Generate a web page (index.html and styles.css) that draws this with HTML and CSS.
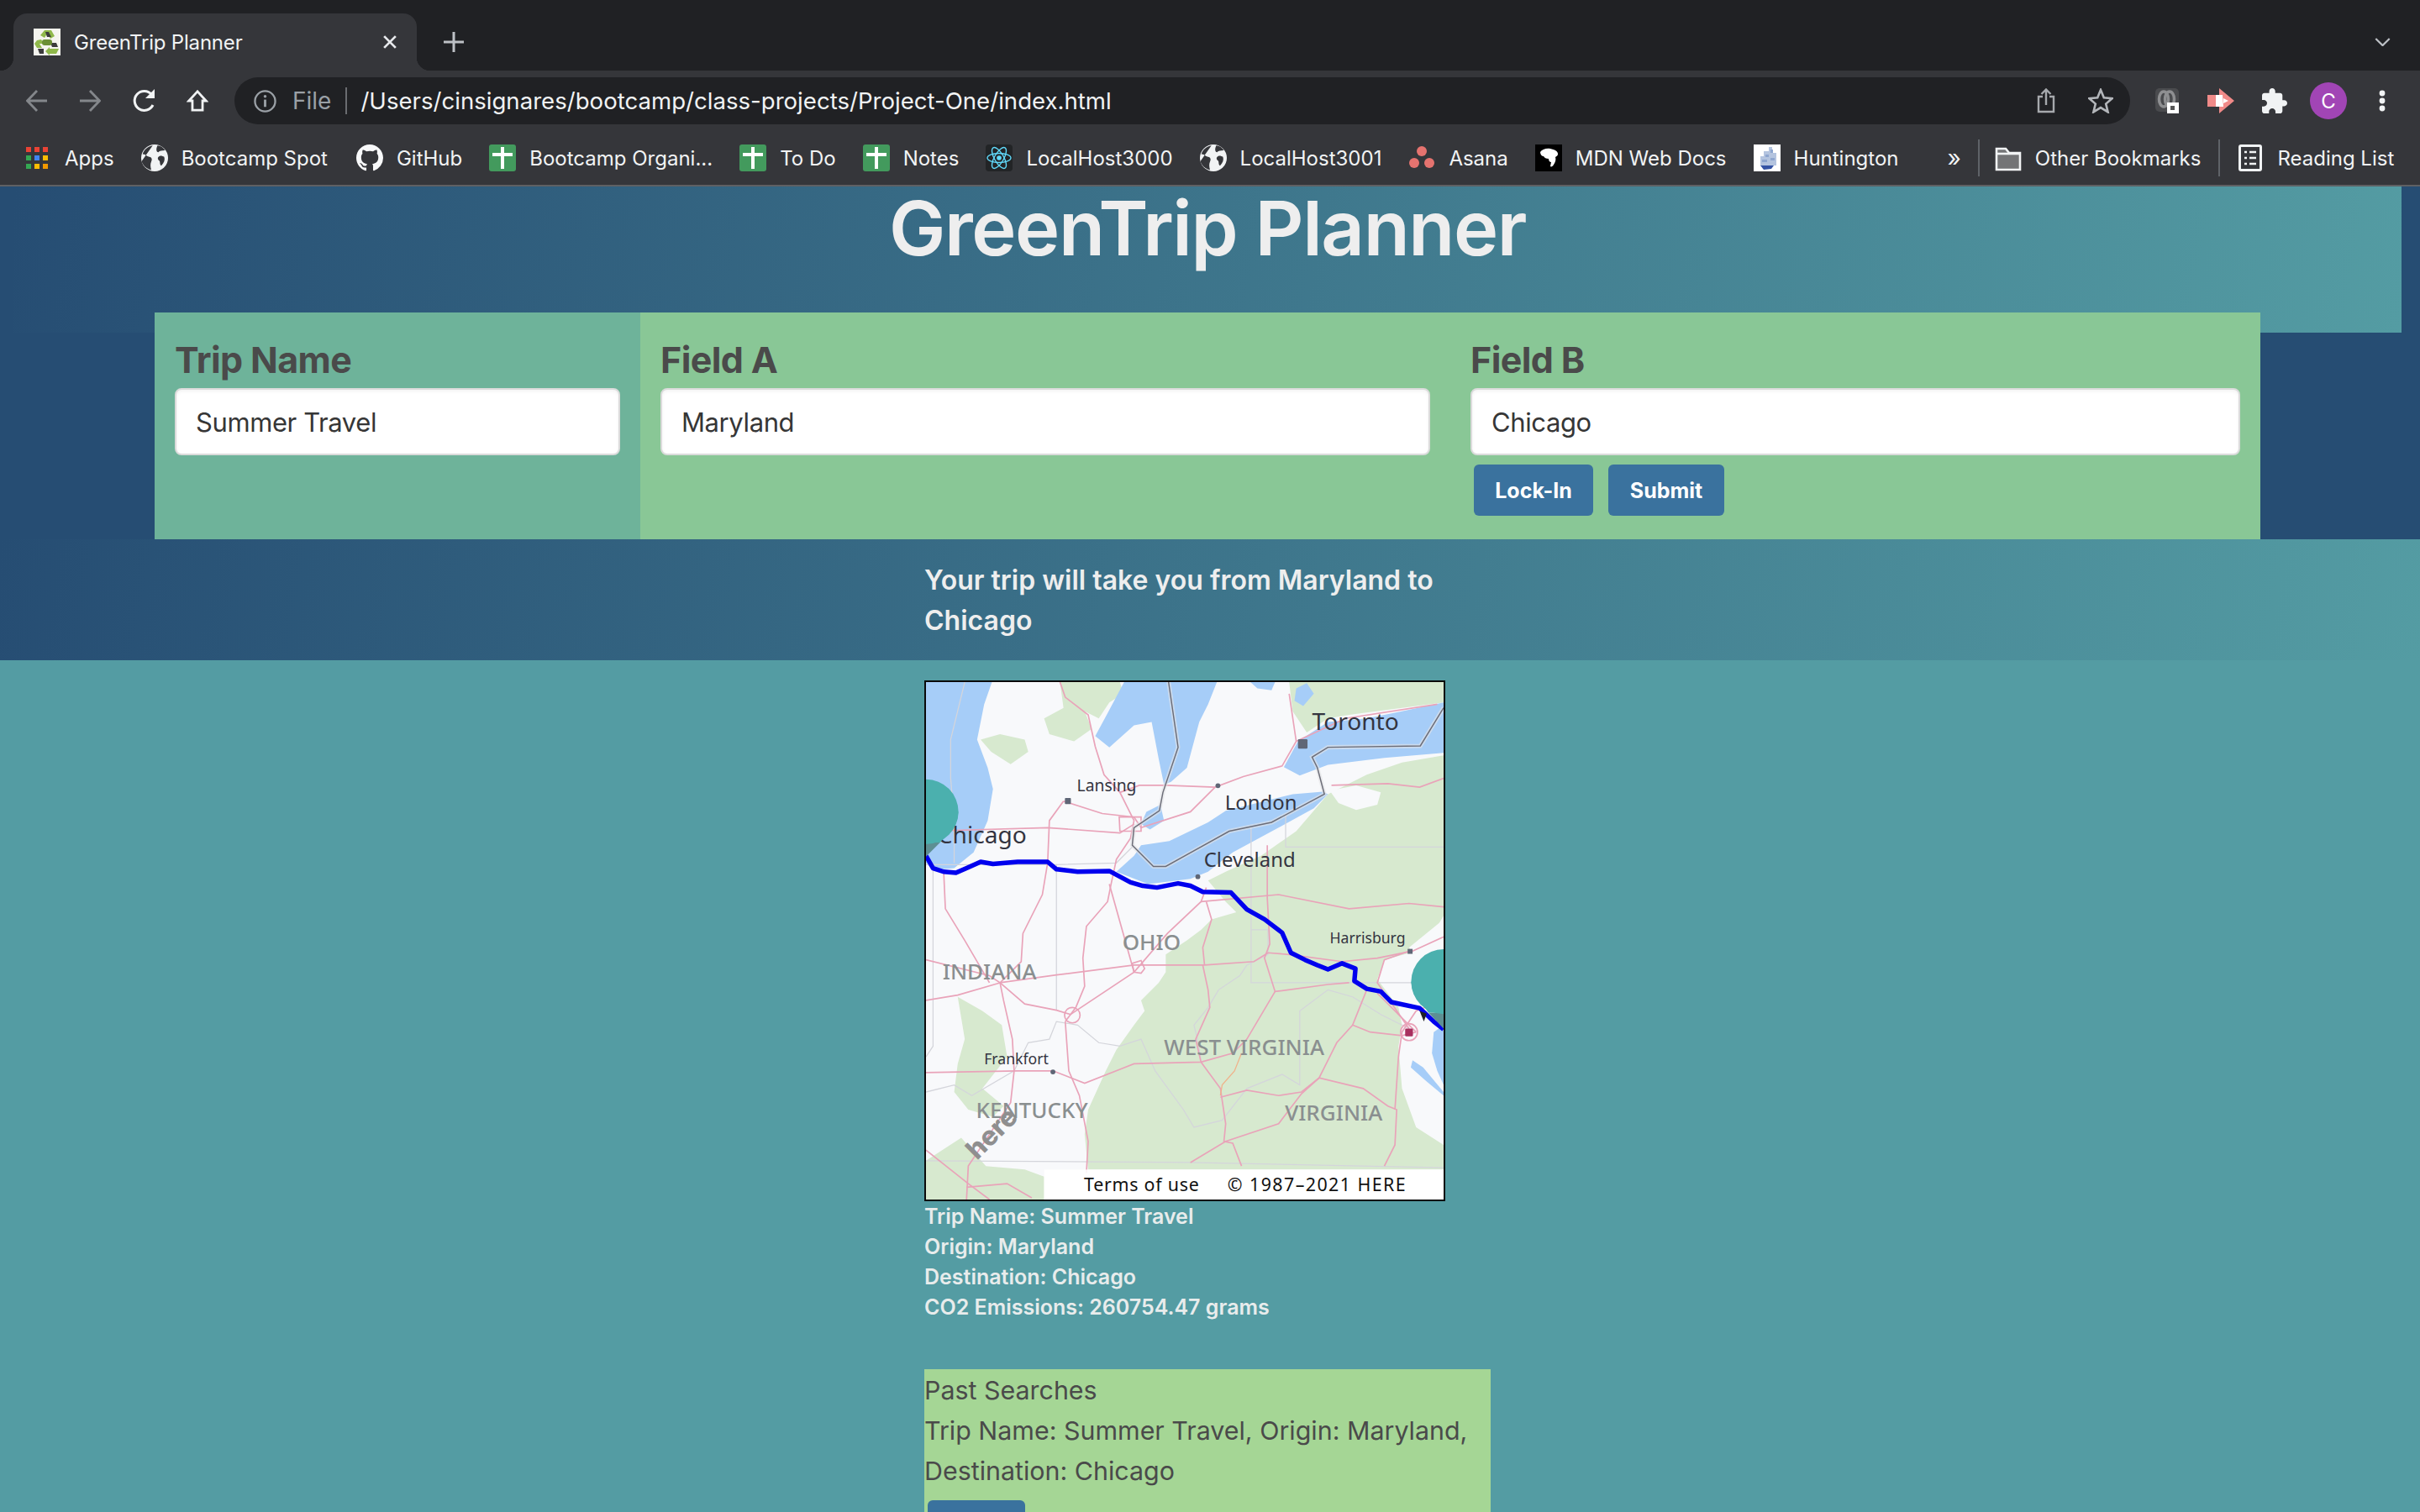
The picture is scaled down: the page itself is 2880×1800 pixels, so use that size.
FILE: index.html
```html
<!DOCTYPE html>
<html lang="en">
<head>
  <meta charset="UTF-8" />
  <title>GreenTrip Planner</title>
  <link rel="stylesheet" href="styles.css">
</head>
<body>

  <svg class="defs" width="0" height="0">
    <symbol id="sheet" viewBox="0 0 32 32">
      <rect width="32" height="32" rx="3" fill="#439a5d"/>
      <rect x="14" y="3" width="4" height="26" fill="#fff"/>
      <rect x="4" y="10" width="24" height="4" fill="#fff"/>
    </symbol>
    <symbol id="globe" viewBox="0 0 28 28">
      <circle cx="14" cy="14" r="14" fill="#f1f3f4"/>
      <path d="M12 1C7 2 3 5 1.500 10c3 0 4 2 7 3 3 .5 3 3 2 5-1 2-1 5 0 8.500-5-1-9-5-10-9M18 13c2-2 4-1 6 0 1 3 0 6-3 9-2-1-1-4-2-5-2-1-2-3-1-4zM17 1c3 0 6 2 8 5-3 1-5 0-7 2-2 0-3-3-1-7z" fill="#35363a"/>
    </symbol>
  </svg>

  <!-- browser chrome -->
  <header class="browser">
    <div class="tabstrip">
      <div class="tab">
        <svg class="favicon" viewBox="0 0 32 32">
          <rect width="32" height="32" fill="#f4f4ee"/>
          <path d="M13 2h8l4 7-5 3-4-6-3 5-5-3z" fill="#8fb84a"/>
          <path d="M4 14l5-1 3 5H7l3 5H4l-3-5z" fill="#8fb84a"/>
          <path d="M19 24h11l-3 6H19v2l-5-5 5-5z" fill="#8fb84a"/>
          <path d="M14 4h4l3 6h-5zM5 24h7v6H7zM20 17h7l2 5h-7z" fill="#3c3c3c"/>
          <rect x="10" y="13" width="12" height="7" rx="3" fill="#6b8f35"/>
        </svg>
        <span class="tab-title">GreenTrip Planner</span>
        <svg class="tab-close" viewBox="0 0 14 14"><path d="M1 1l12 12M13 1L1 13" stroke="#e8eaed" stroke-width="2.400" fill="none"/></svg>
      </div>
      <svg class="new-tab" viewBox="0 0 24 24"><path d="M12 0v24M0 12h24" stroke="#bdc1c6" stroke-width="3" fill="none"/></svg>
      <svg class="tab-list" viewBox="0 0 20 11"><path d="M1 1l9 9 9-9" stroke="#bdc1c6" stroke-width="2.400" fill="none"/></svg>
    </div>

    <div class="toolbar">
      <svg class="nav-icon back" viewBox="0 0 26 26"><path d="M25 13H2M13 1L1.500 13 13 25" stroke="#84878b" stroke-width="2.800" fill="none"/></svg>
      <svg class="nav-icon forward" viewBox="0 0 26 26"><path d="M1 13h23M13 1l11.500 12L13 25" stroke="#84878b" stroke-width="2.800" fill="none"/></svg>
      <svg class="nav-icon reload" viewBox="0 0 30 30"><path d="M25 20a11.500 11.500 0 1 1-1.500-12.500" stroke="#f1f3f4" stroke-width="3" fill="none"/><path d="M27 1v11H16z" fill="#f1f3f4"/></svg>
      <svg class="nav-icon home" viewBox="0 0 26 28"><path d="M13 2L2 14h4.500v12h13V14H24z" stroke="#f1f3f4" stroke-width="3" fill="none"/></svg>
      <div class="omnibox">
        <svg class="info-icon" viewBox="0 0 28 28"><circle cx="14" cy="14" r="12.500" stroke="#9aa0a6" stroke-width="2.400" fill="none"/><path d="M14 12v9" stroke="#9aa0a6" stroke-width="3"/><circle cx="14" cy="8" r="1.800" fill="#9aa0a6"/></svg>
        <span class="scheme">File</span>
        <span class="omni-sep"></span>
        <span class="url">/Users/cinsignares/bootcamp/class-projects/Project-One/index.html</span>
        <svg class="share-icon" viewBox="0 0 22 30"><path d="M7 10H2v18h18V10h-5" stroke="#a6a9ad" stroke-width="2.400" fill="none"/><path d="M11 20V2M5.500 7L11 1.500 16.500 7" stroke="#a6a9ad" stroke-width="2.400" fill="none"/></svg>
        <svg class="star-icon" viewBox="0 0 30 30"><path d="M15 2l3.800 9.300 10 .8-7.600 6.500 2.400 9.800L15 23.100l-8.600 5.300 2.400-9.800L1.200 12.100l10-.8z" stroke="#b3b6ba" stroke-width="2.600" fill="none"/></svg>
      </div>
      <svg class="ext ext-loom" viewBox="0 0 28 30">
        <rect width="28" height="28" rx="5" fill="#4a4b4e"/>
        <ellipse cx="10" cy="13" rx="5.500" ry="9" stroke="#8e8f91" stroke-width="3.500" fill="none"/>
        <ellipse cx="17" cy="13" rx="5.500" ry="9" stroke="#8e8f91" stroke-width="3.500" fill="none"/>
        <rect x="14" y="17" width="14" height="13" fill="#fff"/>
        <path d="M18 21h5v5h-5z" fill="#555"/>
      </svg>
      <svg class="ext ext-video" viewBox="0 0 32 30">
        <path d="M0 8h14V0l18 15-18 15v-8H0z" fill="#f08a88"/>
        <path d="M10 8h8l1 14h-9z" fill="#fff"/>
        <path d="M19 12l6 3-6 3z" fill="#fff"/>
      </svg>
      <svg class="ext ext-puzzle" viewBox="2 1 21 21"><path d="M20.500 11H19V7c0-1.100-.9-2-2-2h-4V3.500C13 2.120 11.880 1 10.500 1S8 2.120 8 3.500V5H4c-1.100 0-1.990.9-1.990 2v3.800H3.500c1.490 0 2.700 1.210 2.700 2.700s-1.210 2.700-2.700 2.700H2V20c0 1.100.9 2 2 2h3.800v-1.500c0-1.490 1.210-2.700 2.700-2.700 1.490 0 2.700 1.210 2.700 2.700V22H17c1.100 0 2-.9 2-2v-4h1.500c1.380 0 2.500-1.120 2.500-2.500S21.880 11 20.500 11z" fill="#f1f3f4"/></svg>
      <span class="avatar">C</span>
      <svg class="menu-dots" viewBox="0 0 10 26"><circle cx="5" cy="4" r="3.400" fill="#f1f3f4"/><circle cx="5" cy="13" r="3.400" fill="#f1f3f4"/><circle cx="5" cy="22" r="3.400" fill="#f1f3f4"/></svg>
    </div>

    <nav class="bookmarks">
      <a class="bm">
        <svg class="bm-icon apps" viewBox="0 0 26 26">
          <path d="M0 0h6v6H0z" fill="#ea4335"/><path d="M10 0h6v6h-6z" fill="#ea4335"/><path d="M20 0h6v6h-6z" fill="#ea4335"/>
          <path d="M0 10h6v6H0z" fill="#34a853"/><path d="M10 10h6v6h-6z" fill="#4285f4"/><path d="M20 10h6v6h-6z" fill="#fbbc04"/>
          <path d="M0 20h6v6H0z" fill="#34a853"/><path d="M10 20h6v6h-6z" fill="#fbbc04"/><path d="M20 20h6v6h-6z" fill="#f29900"/>
        </svg>Apps
      </a>
      <a class="bm bm-spot"><svg class="bm-icon"><use href="#globe"/></svg>Bootcamp Spot</a>
      <a class="bm">
        <svg class="bm-icon" viewBox="0 0 16 16"><path d="M8 0C3.580 0 0 3.580 0 8c0 3.540 2.290 6.530 5.470 7.590.4.070.55-.17.55-.38 0-.19-.01-.82-.01-1.490-2.010.37-2.530-.49-2.690-.94-.09-.23-.48-.94-.82-1.130-.28-.15-.68-.52-.01-.53.63-.01 1.080.58 1.230.82.72 1.210 1.870.87 2.330.66.070-.52.28-.87.51-1.070-1.780-.2-3.640-.89-3.640-3.950 0-.87.31-1.590.82-2.150-.08-.2-.36-1.020.08-2.120 0 0 .67-.21 2.200.82.64-.18 1.320-.27 2-.27.68 0 1.360.09 2 .27 1.530-1.040 2.200-.82 2.200-.82.44 1.100.16 1.920.08 2.120.51.56.82 1.270.82 2.150 0 3.070-1.870 3.750-3.650 3.950.29.25.54.73.54 1.480 0 1.070-.01 1.930-.01 2.200 0 .21.15.46.55.38A8.013 8.013 0 0 0 16 8c0-4.420-3.580-8-8-8z" fill="#f8f9fa"/></svg>GitHub
      </a>
      <a class="bm"><svg class="bm-icon"><use href="#sheet"/></svg>Bootcamp Organi...</a>
      <a class="bm"><svg class="bm-icon"><use href="#sheet"/></svg>To Do</a>
      <a class="bm"><svg class="bm-icon"><use href="#sheet"/></svg>Notes</a>
      <a class="bm">
        <svg class="bm-icon" viewBox="0 0 32 32">
          <rect width="32" height="32" rx="4" fill="#222426"/>
          <circle cx="16" cy="16" r="2.800" fill="#61dafb"/>
          <g stroke="#61dafb" stroke-width="1.400" fill="none">
            <ellipse cx="16" cy="16" rx="14" ry="5.500"/>
            <ellipse cx="16" cy="16" rx="14" ry="5.500" transform="rotate(60 16 16)"/>
            <ellipse cx="16" cy="16" rx="14" ry="5.500" transform="rotate(120 16 16)"/>
          </g>
        </svg>LocalHost3000
      </a>
      <a class="bm"><svg class="bm-icon"><use href="#globe"/></svg>LocalHost3001</a>
      <a class="bm">
        <svg class="bm-icon" viewBox="0 0 32 32"><circle cx="16" cy="8" r="6" fill="#e5736f"/><circle cx="7" cy="22" r="6" fill="#e5736f"/><circle cx="25" cy="22" r="6" fill="#e5736f"/></svg>Asana
      </a>
      <a class="bm">
        <svg class="bm-icon" viewBox="0 0 32 32"><rect width="32" height="32" fill="#000"/><path d="M6 9c2-3 7-5 12-4 5 1 9 3 9 6 0 3-2 3-3 4 1 3 0 6-2 9-1 2-3 3-4 2l1-5c-2 0-3-2-3-4-3 0-5-1-6-3-2 0-4-2-4-5z" fill="#fff"/></svg>MDN Web Docs
      </a>
      <a class="bm">
        <svg class="bm-icon" viewBox="0 0 32 32">
          <rect width="32" height="32" fill="#fff"/>
          <path d="M18 3h4v22h-4zM12 8h6v17h-6zM22 10h5v15h-5zM8 14h4v11H8z" fill="#b4c4df"/>
          <path d="M14 12h4v3h-4zM20 6h3v4h-3zM10 18h6v3h-6zM20 16h5v3h-5z" fill="#8ea6cf"/>
          <path d="M8 25h16l-3 4-9 1z" fill="#3453a4"/>
        </svg>Huntington
      </a>
      <span class="bm-more">»</span>
      <span class="bm-sep"></span>
      <a class="bm bm-folder">
        <svg class="bm-icon" viewBox="0 0 32 32"><path d="M2 5h11l4 5h13v20H2z" fill="#737476" stroke="#f1f3f4" stroke-width="2.600"/><path d="M2 11h28" stroke="#f1f3f4" stroke-width="2.600"/></svg>Other Bookmarks
      </a>
      <span class="bm-sep bm-sep2"></span>
      <a class="bm bm-reading">
        <svg class="bm-icon" viewBox="0 0 28 32"><rect x="1.500" y="1.500" width="25" height="29" rx="1.500" stroke="#f1f3f4" stroke-width="3" fill="none"/><path d="M7 9h3M13 9h8M7 16h3M13 16h8M7 23h3M13 23h8" stroke="#f1f3f4" stroke-width="2.600"/></svg>Reading List
      </a>
    </nav>
  </header>

  <!-- page -->
  <main class="page">
    <section class="hero">
      <div class="title-box">
        <h1 class="title">GreenTrip Planner</h1>
      </div>
      <form class="trip-form">
        <div class="field field-name">
          <label class="label">Trip Name</label>
          <input class="input" type="text" value="Summer Travel" />
        </div>
        <div class="field">
          <label class="label">Field A</label>
          <input class="input" type="text" value="Maryland" />
        </div>
        <div class="field">
          <label class="label">Field B</label>
          <input class="input" type="text" value="Chicago" />
          <div class="buttons">
            <button class="button lock-btn" type="button">Lock-In</button>
            <button class="button submit-btn" type="button">Submit</button>
          </div>
        </div>
      </form>
    </section>

    <section class="summary">
      <p class="column summary-text">Your trip will take you from Maryland to Chicago</p>
    </section>

    <section class="column results">
      <div class="map">
        <svg class="map-svg" viewBox="50 27 1468 1468">
          <rect x="50" y="27" width="1468" height="1468" fill="#f8f9fb"/>

          <!-- land cover -->
          <g fill="#d7e9cf">
            <path d="M430 27H600L610 60 570 85 540 130 500 110 520 160 470 195 400 175 385 130 440 100z"/>
            <path d="M205 190L260 175 330 190 340 225 290 260 235 225z"/>
            <path d="M50 140L80 100 120 130 90 190 50 210z"/>
            <path d="M1080 27H1518V85L1400 100 1250 120 1190 130 1130 170 1090 110z"/>
            <path d="M850 590L900 565 1000 520 1100 450 1190 345 1300 290 1400 255 1518 235V690L1500 720 1440 790 1350 815 1330 870 1390 950 1400 1000 1390 1060 1400 1180 1440 1290 1518 1340V1410H510L500 1310 510 1240 560 1130 590 1070 640 1000 670 960 660 930 710 880 730 850 730 800 790 760 830 730 860 700 930 680 900 650z"/>
            <path d="M140 920L210 960 265 1000 280 1090 210 1180 270 1230 240 1260 170 1240 130 1190 140 1110 160 1040z"/>
            <path d="M50 1385L150 1320 220 1400 330 1410 385 1430V1495H50z"/>
          </g>
          <g fill="#f8f9fb">
            <path d="M1195 335L1270 320 1340 340 1330 375 1270 390 1220 370z"/>
            <path d="M1420 780L1518 700V800L1450 820z"/>
          </g>

          <!-- water -->
          <g fill="#a6cdf8">
            <path d="M50 27H237L215 90 195 190 225 270 240 330 225 420 185 510 130 555 70 560 50 540z"/>
            <path d="M612 27H875L850 90 825 140 790 270 745 310 725 318 710 245 690 140 640 150 570 212 530 180 560 125z"/>
            <path d="M675 395L715 375 725 420 685 445 660 430z"/>
            <path d="M590 565L640 520 660 490 740 478 850 425 900 392 1090 345 1175 338 1190 345 1150 385 1050 440 920 510 850 565 800 585 680 600z"/>
            <path d="M1065 268L1105 195 1190 140 1300 130 1400 110 1518 85V228L1350 242 1190 262 1110 292z"/>
            <path d="M1100 45L1130 30 1150 60 1120 95 1095 80z"/>
            <path d="M970 27H1040L1030 50 990 45z"/>
            <path d="M1490 1020L1518 1000V1170L1500 1130 1485 1080z"/>
            <path d="M1430 1100L1460 1120 1518 1190V1200L1470 1160 1425 1120z"/>
          </g>

          <!-- state lines -->
          <g stroke="#d4d5db" stroke-width="3" fill="none">
            <path d="M160 27L120 190 120 300 130 420 130 540"/>
            <path d="M70 545V1060L50 1090"/>
            <path d="M50 545L420 545V958"/>
            <path d="M420 545L590 540 640 490"/>
            <path d="M972 440V880H1518"/>
            <path d="M1070 400V495H1518"/>
            <path d="M50 1385L800 1390 1518 1405"/>
            <path d="M50 1190L130 1170 180 1200 300 1130 340 1050 400 1040 420 990 480 1000 540 1050 600 1060 660 1040 700 1130 780 1240 810 1290 890 1270 960 1180 1060 1140 1110 1170 1110 960 1190 900 1260 920 1340 970 1420 1010"/>
            <path d="M972 730L1020 730 1020 800 960 830 940 860 880 900 850 950 810 1000 820 1040 830 1100"/>
          </g>

          <!-- roads -->
          <g stroke="#e9a3b9" stroke-width="4" fill="none">
            <path d="M430 27L445 70 510 120 530 210 555 290 600 340 640 420 630 470 590 530 575 600 565 650 505 720 495 810 500 890 475 950 445 990"/>
            <path d="M600 340L655 320 730 320 870 325 950 295 1060 265 1100 195 1080 60"/>
            <path d="M1100 195L1240 130 1500 90"/>
            <path d="M440 365L400 420 395 540 380 630 325 740 320 820 260 880 270 930 295 1040 300 1130"/>
            <path d="M440 365L550 400 640 410 660 440 800 395 870 325"/>
            <path d="M50 450L395 440 600 455 640 430"/>
            <path d="M100 560L105 670 160 760 230 880"/>
            <path d="M50 815L230 860 260 880 420 858 640 830 840 830 980 820 1020 795 1080 800 1230 820 1330 810 1430 790 1518 750"/>
            <path d="M50 930L140 915 260 880"/>
            <path d="M260 880L330 940 420 958 460 970 640 850 735 740 830 650 845 610"/>
            <path d="M640 850L570 600"/>
            <path d="M835 830L850 900 855 950 815 1040 830 1105 885 1180 900 1280 895 1330 920 1335 945 1400"/>
            <path d="M845 650L860 700 835 780 840 830"/>
            <path d="M830 650L1050 630 1250 670 1420 655 1518 665"/>
            <path d="M1018 490V640L1025 770 1010 810 1040 905 1190 885 1250 880"/>
            <path d="M1040 905L960 1040 920 1080 830 1105 640 1110 500 1165 410 1130 310 1130 50 1135"/>
            <path d="M445 990L455 1130 485 1200 510 1330 505 1420"/>
            <path d="M885 1205L960 1185 1050 1200 1115 1190 1165 1150 1290 1180 1360 1230 1385 1240 1380 1340 1350 1400"/>
            <path d="M1300 900L1260 1000 1215 1050 1165 1150 1115 1195 1050 1280 900 1330 800 1390"/>
            <path d="M1260 1000L1310 1020 1400 1030 1440 1020"/>
            <path d="M1518 930L1440 960 1400 1020 1390 1090 1380 1240"/>
            <path d="M1420 790L1350 815 1330 880 1420 1010"/>
            <path d="M1200 320L1360 315 1450 325 1518 300"/>
            <path d="M300 1130L290 1220 230 1310 170 1400 165 1495"/>
            <path d="M50 1355L170 1450 230 1495"/>
            <path d="M165 1460L280 1450 350 1490"/>
            <path d="M635 825L660 817 670 840 660 853 640 850z"/>
            <circle cx="465" cy="972" r="22"/>
            <circle cx="1420" cy="1020" r="24"/>
            <path d="M598 410H660V450H600z"/>
            <path d="M1440 1020L1330 910"/>
          </g>
          <path d="M945 1080L925 1130 890 1170 885 1200" stroke="#f0b28a" stroke-width="3" fill="none"/>

          <!-- international border -->
          <path d="M738 27L765 212 722 340 712 392 640 440 635 490 695 550 730 550 910 450 1030 425 1180 345 1160 270 1145 240 1190 212 1452 208 1518 100" stroke="#e2e3e6" stroke-width="12" fill="none" opacity=".6"/>
          <path d="M738 27L765 212 722 340 712 392 640 440 635 490 695 550 730 550 910 450 1030 425 1180 345 1160 270 1145 240 1190 212 1452 208 1518 100" stroke="#6c6d78" stroke-width="3.500" fill="none"/>

          <!-- state labels -->
          <g class="map-state">
            <text x="607" y="788">OHIO</text>
            <text x="97" y="870">INDIANA</text>
            <text x="725" y="1085">WEST VIRGINIA</text>
            <text x="192" y="1264">KENTUCKY</text>
            <text x="1068" y="1270">VIRGINIA</text>
          </g>

          <!-- cities -->
          <rect x="1105" y="189" width="27" height="27" rx="3" fill="#5f6676"/>
          <rect x="444" y="356" width="17" height="17" rx="2" fill="#5f6676"/>
          <rect x="1416" y="784" width="14" height="14" fill="#5f6676"/>
          <circle cx="878" cy="321" r="7" fill="#5f6676"/>
          <circle cx="821" cy="579" r="7" fill="#5f6676"/>
          <circle cx="410" cy="1133" r="7" fill="#5f6676"/>
          <rect x="1409" y="1010" width="22" height="22" rx="3" fill="#a8305f"/>
          <g class="map-city">
            <text class="city-lg" x="1145" y="164">Toronto</text>
            <text class="city-lg" x="83" y="484">Chicago</text>
            <text class="city-md" x="898" y="389">London</text>
            <text class="city-md" x="838" y="552">Cleveland</text>
            <text class="city-sm" x="478" y="336">Lansing</text>
            <text class="city-xs" x="1195" y="767">Harrisburg</text>
            <text class="city-xs" x="215" y="1112">Frankfort</text>
          </g>

          <!-- route -->
          <polyline points="50,520 70,555 100,565 135,568 165,555 205,537 240,543 310,537 395,537 420,558 480,565 570,563 630,595 665,605 705,610 765,598 800,605 835,622 915,624 960,672 1010,700 1060,738 1085,795 1125,815 1160,830 1190,842 1230,825 1268,840 1265,875 1300,897 1340,905 1370,935 1450,952 1490,990 1518,1012" stroke="#0000ee" stroke-width="13" stroke-linejoin="round" fill="none"/>

          <!-- markers -->
          <path d="M50 482H90L50 522z" fill="#5d8f93"/>
          <path d="M50 395H142L138 420 90 482H50z" fill="#4bb0ae"/>
          <circle cx="50" cy="395" r="92" fill="#4bb0ae"/>
          <path d="M1475 965H1518V1010z" fill="#5d8f93"/>
          <path d="M1518 877H1426L1430 902 1475 965H1518z" fill="#4bb0ae"/>
          <circle cx="1518" cy="877" r="92" fill="#4bb0ae"/>
          <path d="M1450 960L1462 990 1470 968z" fill="#222"/>

          <text class="here-logo" transform="translate(195 1385) rotate(-45)">here</text>
          <rect x="385" y="1410" width="1133" height="85" fill="#fff" opacity=".88"/>
          <text class="map-legal" x="498" y="1472">Terms of use</text>
          <text class="map-legal map-copy" x="905" y="1472">© 1987–2021 HERE</text>
        </svg>
      </div>

      <div class="trip-info">
        <div>Trip Name: Summer Travel</div>
        <div>Origin: Maryland</div>
        <div>Destination: Chicago</div>
        <div>CO2 Emissions: 260754.47 grams</div>
      </div>

      <div class="past">
        <div>Past Searches</div>
        <div>Trip Name: Summer Travel, Origin: Maryland, Destination: Chicago</div>
        <button class="button clear-btn" type="button"></button>
      </div>
    </section>
  </main>

</body>
</html>
```

FILE: styles.css
```css
html, body {
  margin: 0;
  height: 1800px;
  overflow: hidden;
}
body {
  font-family: Inter, "Noto Sans", sans-serif;
  background-color: #549ca3;
}
.defs {
  display: block;
  height: 0;
}

/* browser chrome */
.browser {
  background-color: #35363a;
  color: #f1f3f4;
  height: 222px;
  box-sizing: border-box;
  border-bottom: 2px solid #5f6063;
}
.tabstrip {
  height: 84px;
  background-color: #202124;
  display: flex;
  align-items: center;
  padding-top: 16px;
  padding-left: 16px;
  padding-right: 35px;
  box-sizing: border-box;
}
.tab {
  position: relative;
  align-self: flex-end;
  width: 480px;
  height: 68px;
  box-sizing: border-box;
  background-color: #35363a;
  border-radius: 16px 16px 0 0;
  display: flex;
  align-items: center;
  padding-left: 24px;
  padding-right: 24px;
}
.tab::before,
.tab::after {
  content: "";
  position: absolute;
  bottom: 0;
  width: 16px;
  height: 16px;
}
.tab::before {
  left: -16px;
  background: radial-gradient(circle at 0 0, transparent 16px, #35363a 16.500px);
}
.tab::after {
  right: -16px;
  background: radial-gradient(circle at 100% 0, transparent 16px, #35363a 16.500px);
}
.favicon {
  width: 32px;
  height: 32px;
  margin-right: 16px;
}
.tab-title {
  font-size: 24px;
  letter-spacing: -0.2px;
  flex: 1;
}
.tab-close {
  width: 16px;
  height: 16px;
}
.new-tab {
  width: 24px;
  height: 24px;
  margin-left: 32px;
}
.tab-list {
  width: 19px;
  height: 10px;
  margin-left: auto;
}

.toolbar {
  height: 64px;
  box-sizing: border-box;
  padding-top: 8px;
  display: flex;
  align-items: center;
  position: relative;
}
.nav-icon {
  height: 26px;
  width: 26px;
  flex: none;
}
.back { margin-left: 31px; }
.forward { margin-left: 37px; }
.reload { margin-left: 37px; width: 30px; height: 30px; }
.home { margin-left: 35px; }
.omnibox {
  margin-left: 31px;
  width: 2256px;
  height: 56px;
  border-radius: 28px;
  background-color: #202124;
  display: flex;
  align-items: center;
  padding-left: 23px;
  padding-right: 20px;
  box-sizing: border-box;
}
.info-icon {
  width: 27px;
  height: 27px;
}
.scheme {
  color: #9aa0a6;
  font-size: 28px;
  margin-left: 19px;
}
.omni-sep {
  width: 2px;
  height: 32px;
  background-color: #6a6c70;
  margin-left: 17px;
  margin-right: 16px;
}
.url {
  color: #f1f3f4;
  font-size: 27.600px;
  flex: 1;
  white-space: nowrap;
}
.share-icon {
  width: 22px;
  height: 30px;
}
.star-icon {
  width: 30px;
  height: 30px;
  margin-left: 39px;
}
.ext {
  flex: none;
  height: 30px;
}
.ext-loom { width: 28px; margin-left: 30px; }
.ext-video { width: 32px; margin-left: 34px; }
.ext-puzzle { width: 32px; margin-left: 32px; }
.avatar {
  width: 44px;
  height: 44px;
  border-radius: 50%;
  background-color: #a145b5;
  color: #fff;
  font-size: 24px;
  display: flex;
  align-items: center;
  justify-content: center;
  margin-left: 26px;
  flex: none;
}
.menu-dots {
  width: 10px;
  height: 26px;
  margin-left: 37px;
}

.bookmarks {
  height: 72px;
  display: flex;
  align-items: center;
  font-size: 24px;
  padding-left: 31px;
  padding-top: 8px;
  box-sizing: border-box;
  white-space: nowrap;
}
.bm {
  display: flex;
  align-items: center;
  gap: 16px;
  margin-right: 32px;
}
.bm-spot { margin-right: 34px; }
.bm-icon {
  width: 32px;
  height: 32px;
  flex: none;
}
.apps {
  width: 26px;
  height: 26px;
  margin-right: 4px;
}
.bm-more {
  font-size: 28px;
  margin-left: 26px;
}
.bm-sep {
  width: 2px;
  height: 44px;
  background-color: #5f6368;
  margin-left: 20px;
  margin-right: 18px;
}
.bm-sep2 {
  margin-left: 0;
  margin-right: 20px;
}
.bm-folder { margin-right: 21px; }
.bm-reading { margin-right: 0; }

/* page */
.hero {
  background-color: #264d73;
  height: 420px;
}
.title-box {
  margin-left: 16px;
  width: 2842px;
  height: 174px;
  background: linear-gradient(100deg, #264d73, #549ca3);
}
.title {
  margin: 0;
  text-align: center;
  color: #eeeeee;
  font-size: 90px;
  font-weight: 600;
  line-height: 100px;
  letter-spacing: -1.400px;
}
.trip-form {
  margin-top: -24px;
  margin-left: 184px;
  width: 2506px;
  height: 270px;
  display: grid;
  grid-template-columns: 578px 964px 964px;
  background-color: #89c796;
}
.field {
  padding: 24px;
  box-sizing: border-box;
}
.field-name {
  background-color: #6eb39a;
}
.label {
  display: block;
  color: #4a4a4a;
  font-size: 43px;
  font-weight: 700;
  line-height: 56px;
  letter-spacing: -0.6px;
  margin-top: 4px;
  margin-bottom: 6px;
}
.input {
  display: block;
  width: 100%;
  height: 80px;
  box-sizing: border-box;
  background-color: #fff;
  border: 2px solid #dbdbdb;
  border-radius: 8px;
  box-shadow: inset 0 2px 4px rgba(10, 10, 10, 0.05);
  color: #363636;
  font-family: inherit;
  font-size: 31px;
  letter-spacing: -0.4px;
  padding: 0 23px;
}
.buttons {
  display: flex;
  gap: 18px;
  margin-top: 11px;
  margin-left: 4px;
}
.button {
  height: 61px;
  border: none;
  border-radius: 6px;
  background-color: #3a729e;
  color: #fff;
  font-family: inherit;
  font-size: 25px;
  font-weight: 700;
  padding: 0;
}
.lock-btn { width: 142px; }
.submit-btn { width: 138px; }

.summary {
  height: 144px;
  box-sizing: border-box;
  padding-top: 25px;
  background: linear-gradient(100deg, #264d73, #549ca3);
}
.column {
  width: 674px;
  margin-left: 1100px;
}
.summary-text {
  margin-top: 0;
  margin-bottom: 0;
  color: #eeeeee;
  font-size: 32px;
  font-weight: 600;
  line-height: 48px;
}
.results {
  padding-top: 24px;
}
.map {
  width: 620px;
  height: 620px;
  box-sizing: border-box;
  border: 2px solid #0a0a0a;
}
.map-svg {
  display: block;
  width: 616px;
  height: 616px;
  font-family: "Noto Sans", sans-serif;
}
.map-state text {
  fill: #8a8f90;
  font-size: 62px;
  font-weight: 500;
}
.map-city text { fill: #33343f; }
.city-lg { font-size: 67px; }
.city-md { font-size: 57px; }
.city-sm { font-size: 46px; }
.city-xs { font-size: 42px; }
.here-logo {
  fill: #8f8f8f;
  font-size: 76px;
  font-weight: 800;
  font-family: Inter, sans-serif;
}
.map-legal {
  fill: #111;
  font-size: 51px;
  letter-spacing: 1.800px;
}
.map-copy {
  letter-spacing: 3.400px;
}
.trip-info {
  color: #e8ecec;
  font-size: 25px;
  font-weight: 600;
  line-height: 36px;
}
.past {
  margin-top: 56px;
  padding-top: 1px;
  background-color: #a5d695;
  color: #4a4a4a;
  font-size: 30.400px;
  line-height: 48px;
}
.clear-btn {
  display: block;
  width: 116px;
  margin-top: 11px;
  margin-left: 4px;
}
```
